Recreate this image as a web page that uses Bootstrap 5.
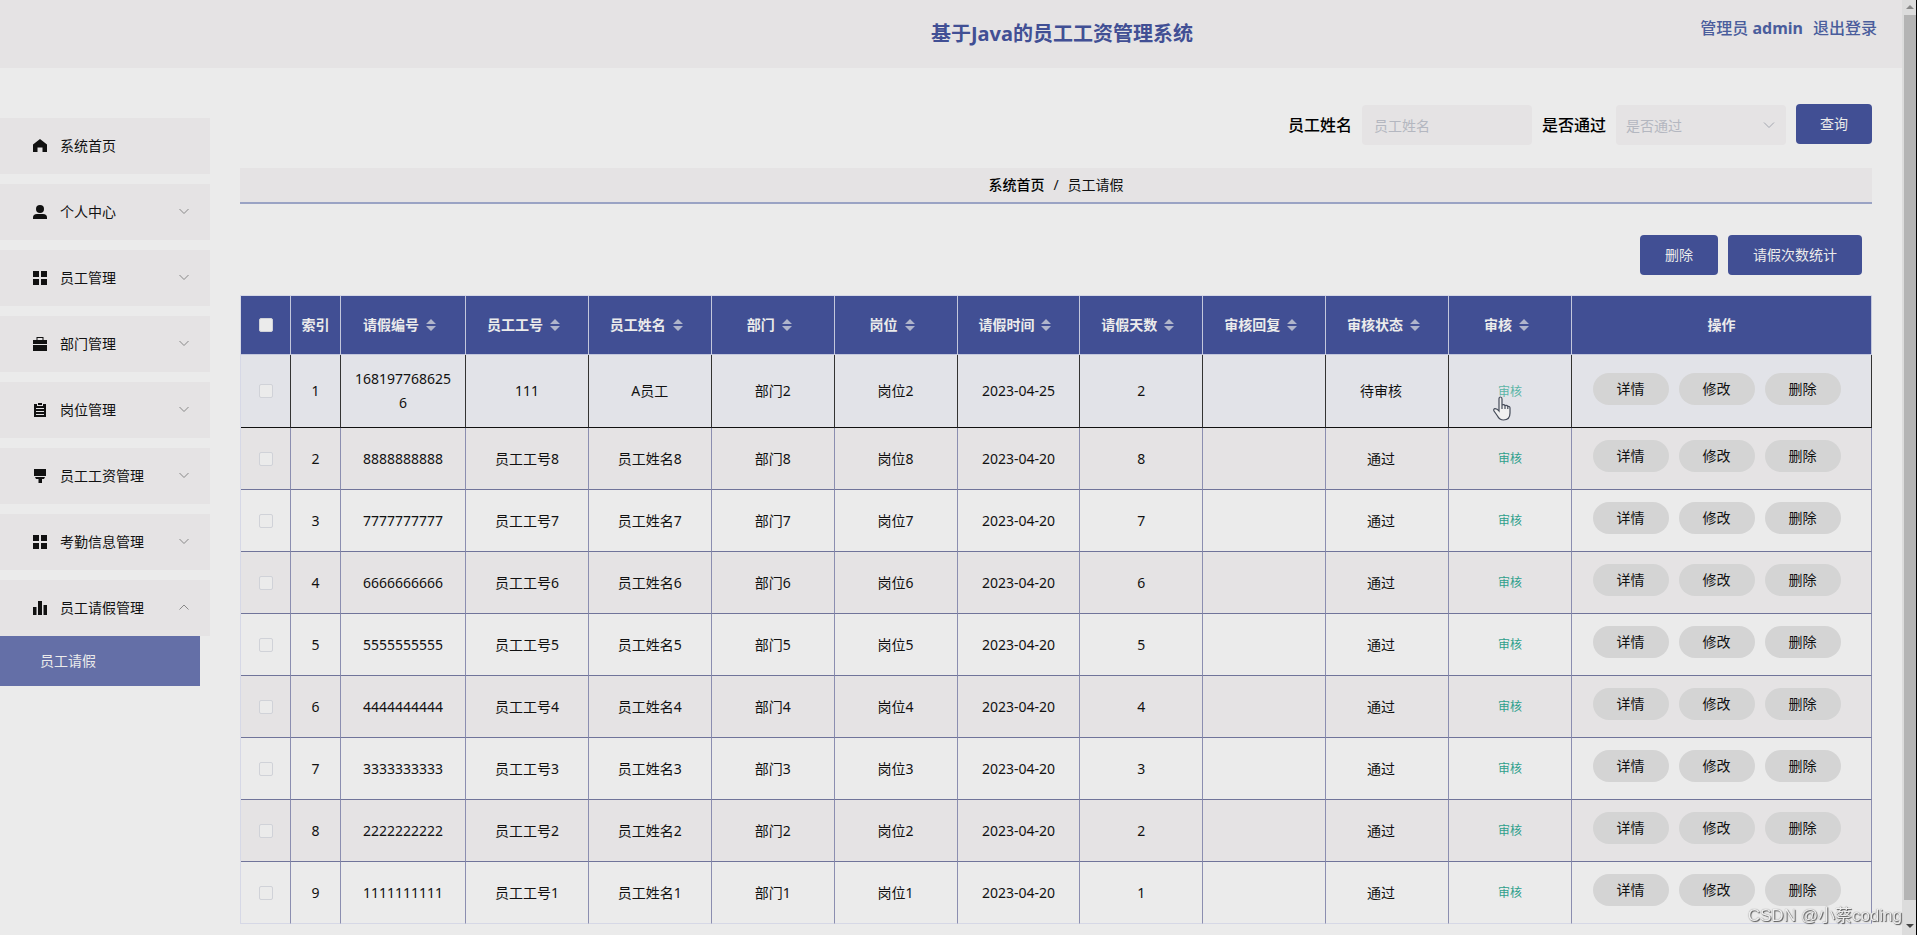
<!DOCTYPE html>
<html lang="zh-CN">
<head>
<meta charset="utf-8">
<meta name="viewport" content="width=device-width, initial-scale=1">
<title>基于Java的员工工资管理系统</title>
<link href="https://cdn.jsdelivr.net/npm/bootstrap@5.3.0/dist/css/bootstrap.min.css" rel="stylesheet">
<style>
:root{--brand:#414f94;--panel:#e5e3e4;--page:#ebebeb;--rule:#70749a;--pale:#d6d8e6}
body{font:14px/24px "Noto Sans","Noto Sans CJK SC",sans-serif;color:#111;background:var(--page)}
a{text-decoration:none;color:inherit}
.topbar{display:grid;height:68px;background:var(--panel);color:var(--brand)}
.topbar>*{grid-area:1/1}
.topbar h1{font-size:20px;line-height:24px;font-weight:700;padding-left:222px}
.account{font-size:16px;font-weight:500;color:#4a5d9c;gap:10px;padding:16px 25px 0 0}
.side{width:210px;padding-top:50px}
.side li+li{margin-top:10px}
.menu-item{height:56px;background:var(--panel);padding:0 20px 0 33px;gap:13px;width:100%;border:0;color:#111;text-align:left}
.menu-item svg:first-child{width:14px;height:14px;fill:#111}
.chev{width:12px;height:12px;fill:none;stroke:#888;margin:0 0 3px auto}
.sub-item{height:50px;width:200px;background:#646fa7;color:#ebebeb;padding-left:40px}
.content-area{padding:36px 30px 0;min-width:0}
.filters{gap:10px}
.filters label{font-size:16px;font-weight:500;color:#000}
.filters .form-control,.filters .form-select{width:170px;height:40px;margin-top:1px;border:0;border-radius:4px;background-color:var(--panel);font-size:14px;color:#b4b7c0;padding:0 12px}
.filters .form-select{--bs-form-select-bg-img:url("data:image/svg+xml,%3Csvg xmlns='http://www.w3.org/2000/svg' viewBox='0 0 12 12'%3E%3Cpath d='M1 3.5l5 5 5-5' fill='none' stroke='%23a4a7b0'/%3E%3C/svg%3E");background-size:12px;background-position:right 11px center;padding-left:10px}
.filters .form-control::placeholder{color:#b4b7c0}
.btn-brand{height:40px;font-size:14px;line-height:24px;padding:0 24px;border:0;border-radius:4px;background:var(--brand);color:#ebebeb}
.btn-brand:hover{background:#364382;color:#fff}
.crumbs{height:36px;margin-top:23px;background:var(--panel);border-bottom:2px solid #9aa3c4;gap:9px}
.crumbs a{font-weight:500;color:#000}
.tools{gap:10px;padding:31px 10px 20px}
.tools .btn-brand{padding:0 25px}
.leave{table-layout:fixed;width:100%;border-collapse:separate;border-spacing:0;border:0 solid var(--pale);border-width:1px 0 0 1px;text-align:center}
.leave th{height:59px;background:var(--brand);color:#ebebeb;font-weight:700;border:0 solid #c3c7dc;border-width:0 1px 1px 0;padding:0}
.leave td{padding:12px 10px;border:0 solid var(--rule);border-width:0 1px 1px 0;border-right-color:#8b8eb0;word-break:break-all}
.leave td.state{padding-right:22px}
.leave tr:nth-child(even) td{background:var(--panel)}
.leave tr.current td{background:#e2e3e8;border-color:#111;border-right-color:#333}
.leave tr:last-child td{border-bottom-color:var(--pale)}
.leave .form-check-input{display:block;width:14px;height:14px;margin:0 auto;border:1px solid #d0d2d8;border-radius:2px;background-color:var(--page)}
.sorter{width:24px;height:12px;fill:#b0b5cb;vertical-align:-1px}
.check-link{font-size:12px;color:#2fa08c}
.current .check-link{color:#5bb5a6}
.leave td.ops{padding:12px 0;white-space:nowrap}
.ops div{gap:10px;padding:0 10px 5px 0}
.btn-soft{width:76px;height:32px;padding:0;border:0;border-radius:16px;background:#d4d4d4;font-size:14px;line-height:24px;color:#111}
.rail{width:15px;background:#dcdcdc;border-right:1px solid #000;padding-left:2px}
.rail i{flex:1;background:#b4b4b4}
.rail svg{width:12px;height:15px;flex:none}
.rail svg:last-child{height:35px}
.pointer-hand{position:absolute;left:43px;top:41px;width:20px;height:26px}
.watermark{position:fixed;right:15px;bottom:7px;font:17px/24px "Liberation Sans","Noto Sans CJK SC",sans-serif;color:#eee;text-shadow:1px 1px 1px #555,0 0 1px #777;pointer-events:none}
</style>
</head>
<body class="d-flex vh-100 overflow-hidden">
<svg class="d-none">
 <symbol id="home" viewBox="0 0 14 14"><path d="M7 0 0 5.600V13h4.500V8.500h5V13H14V5.600z"/></symbol>
 <symbol id="user" viewBox="0 0 14 14"><circle cx="7" cy="4" r="4"/><path d="M0 14v-1.500Q0 9 4 9h6q4 0 4 3.500V14z"/></symbol>
 <symbol id="grid" viewBox="0 0 14 14"><path d="M0 0h6v6H0zM8 0h6v6H8zM0 8h6v6H0zM8 8h6v6H8z"/></symbol>
 <symbol id="case" viewBox="0 0 14 14"><path d="M3.500 3V0h7v3H14v4H0V3zm1 0h5V1h-5zM0 8h14v6H0z"/></symbol>
 <symbol id="order" viewBox="0 0 14 14"><path fill-rule="evenodd" d="M1 1h3v2h6V1h3v13H1zM3 5v1h8V5zm0 3v1h8V8zm0 3v1h8v-1zM5 0h4v2H5z"/></symbol>
 <symbol id="brush" viewBox="0 0 14 14"><path d="M1 0h12v7H1zM2 8h10l-1 2H9v4H5.500v-4H3z"/></symbol>
 <symbol id="bars" viewBox="0 0 14 14"><path d="M0 6h3.500v8H0zM5 0h4v14H5zM10.500 4H14v10h-3.500z"/></symbol>
 <symbol id="down" viewBox="0 0 12 12"><path d="m1.500 4 4.500 4.500L10.500 4"/></symbol>
 <symbol id="up" viewBox="0 0 12 12"><path d="m1.500 8.500L6 4l4.500 4.500"/></symbol>
 <symbol id="sort" viewBox="0 0 24 12"><path d="M7 5l5-5 5 5zM7 7h10l-5 5z"/></symbol>
</svg>
<div class="flex-grow-1 overflow-hidden">
 <header class="topbar">
  <h1 class="m-0 text-center align-self-center">基于Java的员工工资管理系统</h1>
  <div class="account d-flex justify-content-end"><span>管理员 <b>admin</b></span><a href="#">退出登录</a></div>
 </header>
 <div class="d-flex">
  <nav class="side flex-shrink-0">
   <ul class="list-unstyled m-0" id="menu">
    <li><a href="#" class="menu-item d-flex align-items-center"><svg><use href="#home"/></svg>系统首页</a></li>
   </ul>
   <a href="#" class="sub-item d-flex align-items-center">员工请假</a>
  </nav>
  <main class="content-area flex-grow-1">
   <form class="filters d-flex justify-content-end">
    <label class="align-self-center" for="name">员工姓名</label>
    <input class="form-control" id="name" placeholder="员工姓名">
    <label class="align-self-center" for="pass">是否通过</label>
    <select class="form-select" id="pass"><option>是否通过</option></select>
    <button type="button" class="btn btn-brand">查询</button>
   </form>
   <div class="crumbs d-flex justify-content-center align-items-center"><a href="#">系统首页</a><span>/</span><span>员工请假</span></div>
   <div class="tools d-flex justify-content-end"><button class="btn btn-brand">删除</button><button class="btn btn-brand">请假次数统计</button></div>
   <table class="leave">
    <colgroup><col style="width:50px"><col style="width:50px"><col style="width:125px"><col span="9"><col style="width:300px"></colgroup>
    <thead><tr id="head"></tr></thead>
    <tbody id="rows"></tbody>
   </table>
  </main>
 </div>
</div>
<div class="rail d-flex flex-column flex-shrink-0" aria-hidden="true">
 <svg viewBox="0 0 12 15"><path d="M2 9l4-4 4 4z" fill="#888"/></svg><i></i><svg viewBox="0 0 12 35"><path d="M2 24h8l-4 4z" fill="#444"/></svg>
</div>
<div class="watermark">CSDN @小蔡coding</div>
<script src="https://cdn.jsdelivr.net/npm/bootstrap@5.3.0/dist/js/bootstrap.bundle.min.js"></script>
<script>
const menu = [['user','个人中心'],['grid','员工管理'],['case','部门管理'],['order','岗位管理'],['brush','员工工资管理'],['grid','考勤信息管理'],['bars','员工请假管理']];
document.getElementById('menu').insertAdjacentHTML('beforeend', menu.map(([icon, text], i) =>
 `<li><button class="menu-item d-flex align-items-center"><svg><use href="#${icon}"/></svg>${text}<svg class="chev"><use href="#${i === 6 ? 'up' : 'down'}"/></svg></button></li>`).join(''));

const heads = ['请假编号','员工工号','员工姓名','部门','岗位','请假时间','请假天数','审核回复','审核状态','审核'];
document.getElementById('head').innerHTML =
 '<th><input type="checkbox" class="form-check-input" aria-label="全选"></th><th>索引</th>' +
 heads.map(t => `<th>${t}<svg class="sorter"><use href="#sort"/></svg></th>`).join('') + '<th>操作</th>';

const data = [['1681977686256','111','A员工','部门2','岗位2','2023-04-25','2','','待审核']];
for (let n = 8; n > 0; n--)
 data.push([String(n).repeat(10),'员工工号'+n,'员工姓名'+n,'部门'+n,'岗位'+n,'2023-04-20',n,'','通过']);
const hand = '<svg class="pointer-hand" viewBox="0 0 20 26"><path d="M7 15V3q0-2 1.500-2T10 3v6q2-1 3 .6 2-.7 2.800.8 2.200-.4 2.200 1.800V17q0 7-6.500 7-4 0-6-4L2 15q-.8-2 .8-2.300Q5 12.500 7 15zM10 8.500V13M13 9.500V13M15.800 10.500V13" fill="#f0f0f0" stroke="#444a58" stroke-width="1.200"/></svg>';
document.getElementById('rows').innerHTML = data.map((r, i) =>
 `<tr${i ? '' : ' class="current"'}><td><input type="checkbox" class="form-check-input" aria-label="选择第${i + 1}行"></td><td>${i + 1}</td>` +
 r.map((v, c) => `<td${c === 8 ? ' class="state"' : ''}>${v}</td>`).join('') +
 `<td class="position-relative"><a href="#" class="check-link">审核</a>${i ? '' : hand}</td>` +
 '<td class="ops"><div class="d-flex justify-content-center"><button class="btn btn-soft">详情</button><button class="btn btn-soft">修改</button><button class="btn btn-soft">删除</button></div></td></tr>').join('');
</script>
</body>
</html>
